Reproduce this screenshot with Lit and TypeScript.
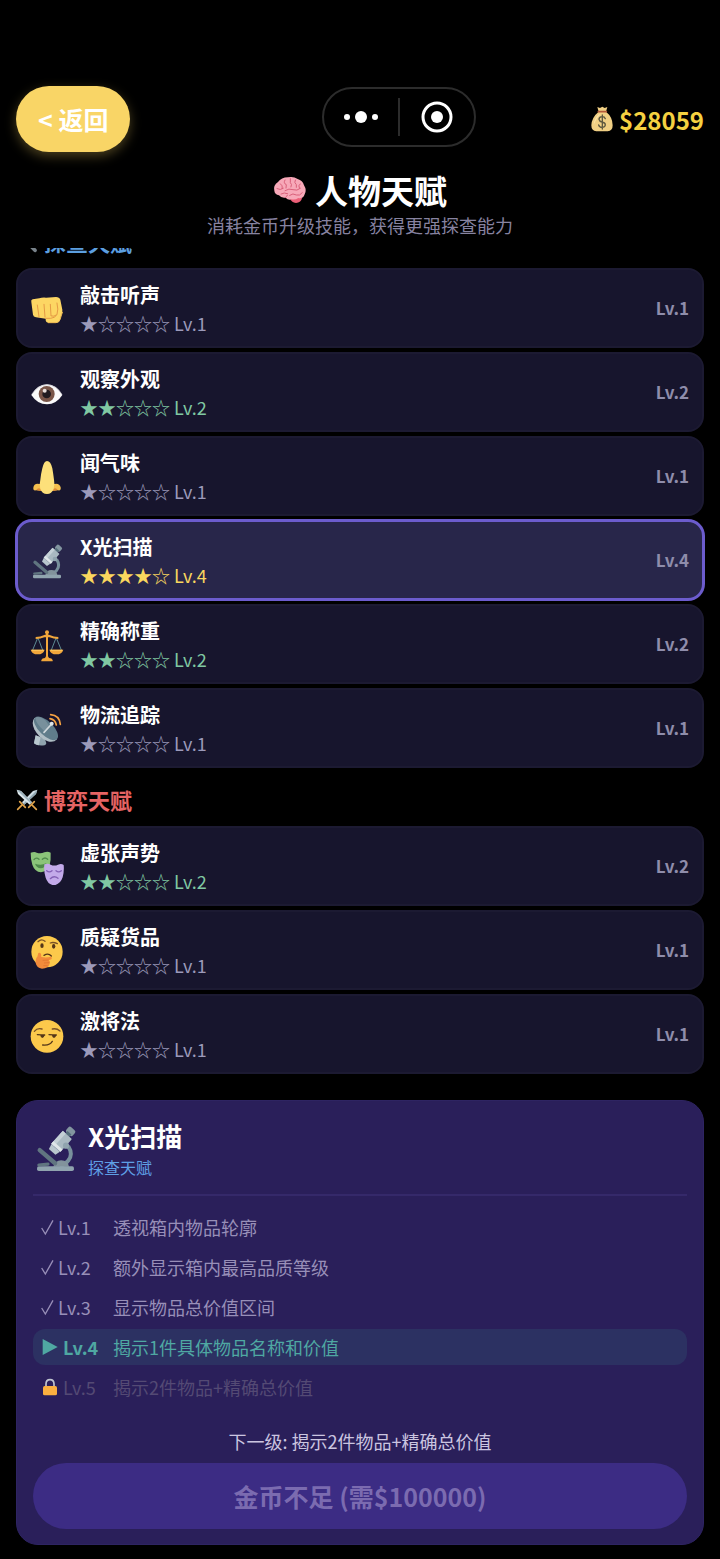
import { LitElement, html, css, svg, nothing } from 'lit';
import { customElement, property, state } from 'lit/decorators.js';
import { classMap } from 'lit/directives/class-map.js';

const MAX_LEVEL = 5;

interface Talent {
  id: string;
  name: string;
  level: number;
  perks?: string[];
  cost?: number;
}

interface Group {
  id: string;
  icon: string;
  title: string;
  talents: Talent[];
}

const GROUPS: Group[] = [
  {
    id: 'explore',
    icon: 'magnifier',
    title: '探查天赋',
    talents: [
      { id: 'fist', name: '敲击听声', level: 1 },
      { id: 'eye', name: '观察外观', level: 2 },
      { id: 'nose', name: '闻气味', level: 1 },
      {
        id: 'microscope',
        name: 'X光扫描',
        level: 4,
        cost: 100000,
        perks: [
          '透视箱内物品轮廓',
          '额外显示箱内最高品质等级',
          '显示物品总价值区间',
          '揭示1件具体物品名称和价值',
          '揭示2件物品+精确总价值',
        ],
      },
      { id: 'scales', name: '精确称重', level: 2 },
      { id: 'satellite', name: '物流追踪', level: 1 },
    ],
  },
  {
    id: 'game',
    icon: 'swords',
    title: '博弈天赋',
    talents: [
      { id: 'masks', name: '虚张声势', level: 2 },
      { id: 'thinking', name: '质疑货品', level: 1 },
      { id: 'smirk', name: '激将法', level: 1 },
    ],
  },
];

// talent icons share a 102x114 box
const BOX = '0 0 102 114';

const ICONS: Record<string, { box: string; art: unknown }> = {
  fist: {
    box: BOX,
    art: svg`
      <path fill="#fdd663" d="M4 39Q2 33 8 31L28 28Q36 25 48 26L78 24Q88 24 91 32L97 62Q98 72 94 78L90 92Q87 101 78 101L54 101Q46 99 47 89L18 85Q10 84 9 77Z"/>
      <path fill="none" stroke="#e59a45" stroke-width="3" stroke-linecap="round" d="M22 48L27 83M42 46L45 84M61 46L63 80M81 42Q86 62 81 76Q76 87 62 88L48 88M64 81Q72 84 79 78"/>
      <path fill="none" stroke="#f2bd55" stroke-width="3" stroke-linecap="round" d="M55 101L78 101Q87 101 90 92L97 70"/>`,
  },
  eye: {
    box: BOX,
    art: svg`
      <path fill="#fafafa" d="M4 66Q22 34 51 34Q79 34 97 66Q79 94 51 94Q22 94 4 66Z"/>
      <path fill="none" stroke="#c3c0c8" stroke-width="2" d="M5 64Q24 36 51 35Q78 36 96 64"/>
      <circle cx="50" cy="63" r="24" fill="#795548"/>
      <circle cx="50" cy="63" r="13" fill="#211b20"/>
      <circle cx="44" cy="53" r="6" fill="#e6ddda"/>`,
  },
  nose: {
    box: BOX,
    art: svg`
      <path fill="#f5bf4e" d="M28 81Q12 78 10 92Q9 102 18 100L32 101L70 101L84 100Q94 102 92 91Q88 78 74 81Z"/>
      <path fill="#e08a38" d="M19 99Q23 92 31 95L34 102ZM83 99Q79 92 71 95L68 102Z"/>
      <path fill="#fde07a" d="M51 12Q62 12 67 34Q70 52 72 68Q75 82 71 95Q65 111 51 111Q36 111 31 95Q27 82 31 68Q33 50 37 34Q42 12 51 12Z"/>`,
  },
  microscope: {
    box: BOX,
    art: svg`
      <path fill="none" stroke="#78909c" stroke-width="9" d="M80 55Q92 74 80 88Q74 96 61 101"/>
      <path fill="#82939c" d="M46 102Q50 87 64 87Q79 87 82 102Z"/>
      <rect x="9" y="101" width="84" height="11" rx="4" fill="#90a4ae"/>
      <path fill="none" stroke="#607580" stroke-width="10" stroke-linecap="round" d="M15 64L50 94"/>
      <path stroke="#607580" stroke-width="7" stroke-linecap="round" d="M13 98L34 96"/>
      <g transform="rotate(42 62 46)">
        <rect x="53" y="4" width="20" height="16" rx="5" fill="#82959f"/>
        <rect x="57" y="16" width="12" height="8" fill="#546e7a"/>
        <rect x="49" y="23" width="28" height="40" rx="2" fill="#a9b9c1"/>
        <rect x="49" y="23" width="9" height="40" fill="#c4d0d6"/>
        <rect x="49" y="55" width="28" height="7" fill="#dfe6e9"/>
        <path fill="#b8c6cd" d="M50 63H76L73 75H53Z"/>
      </g>
      <circle cx="75" cy="54" r="7" fill="#90a4ae"/>`,
  },
  scales: {
    box: BOX,
    art: svg`
      <g fill="none" stroke="#5d8b93" stroke-width="3">
        <path d="M23 39L8 75M24 39L38 75M78 39L64 75M79 39L94 75"/>
      </g>
      <g fill="#f2a73b">
        <circle cx="51" cy="22" r="6"/>
        <rect x="48" y="24" width="6" height="76"/>
        <path d="M17 36Q31 36 43 30Q51 25 59 30Q71 36 85 36V42Q70 42 59 37H43Q32 42 17 42Z"/>
        <path d="M2 74H44Q40 88 23 88Q6 88 2 74ZM58 74H100Q96 88 79 88Q62 88 58 74Z"/>
        <path d="M34 109V105Q36 99 45 99L48 94H54L57 99Q66 99 68 105V109Z"/>
      </g>
      <path fill="#ffca5f" d="M5 74H41V77H6ZM61 74H97L96 77H62Z"/>`,
  },
  satellite: {
    box: BOX,
    art: svg`
      <path fill="#90a4ae" d="M17 79L12 103Q22 112 44 109Q48 108 49 103L45 91Z"/>
      <path fill="#b8c7ce" d="M17 79L12 103Q17 108 26 109L32 85Z"/>
      <path fill="#b0bec5" d="M14 26Q3 38 13 61Q27 89 53 97Q71 102 81 91Z"/>
      <ellipse cx="48" cy="58" rx="46" ry="21" transform="rotate(44 48 58)" fill="#607d8b"/>
      <path fill="#78909c" d="M16 26Q26 20 46 34L58 51L42 65Q18 44 16 26Z"/>
      <path stroke="#cfd8dc" stroke-width="5" stroke-linecap="round" d="M42 70L65 45"/>
      <circle cx="65" cy="44" r="6" fill="#dfe6e9"/>
      <path fill="none" stroke="#f5a142" stroke-width="5" stroke-linecap="round" d="M62 17Q88 19 91 46M60 29Q76 32 79 48"/>`,
  },
  masks: {
    box: BOX,
    art: svg`
      <path fill="#8bc47a" d="M2 17Q14 13 20 17Q32 21 43 16Q53 12 62 17Q63 39 59 54Q52 73 33 76Q14 74 7 53Q2 39 2 17Z"/>
      <path fill="none" stroke="#4f8a4c" stroke-width="4" stroke-linecap="round" d="M12 38Q19 29 27 37M37 37Q45 29 53 37"/>
      <path fill="#4f8a4c" d="M15 50Q32 57 49 49Q45 64 32 64Q20 63 15 50Z"/>
      <path fill="#c3aaea" d="M43 52Q55 48 62 53Q73 58 84 53Q94 48 101 54Q103 73 98 91Q91 112 72 115Q54 113 47 92Q41 75 43 52Z"/>
      <path fill="none" stroke="#8460b5" stroke-width="4" stroke-linecap="round" d="M50 71Q58 78 66 71M78 71Q86 78 94 71M61 95Q72 84 84 94"/>`,
  },
  thinking: {
    box: BOX,
    art: svg`
      <circle cx="51" cy="62" r="47" fill="#fcc94b"/>
      <path fill="none" stroke="#7a5226" stroke-width="4" stroke-linecap="round" d="M24 32Q34 22 45 31M61 36Q70 32 82 38"/>
      <ellipse cx="36" cy="44" rx="5" ry="7" fill="#543619"/>
      <ellipse cx="71" cy="46" rx="5" ry="7" fill="#543619"/>
      <path fill="none" stroke="#543619" stroke-width="4" stroke-linecap="round" d="M42 73Q55 65 64 75"/>
      <path fill="#f28b3b" d="M17 96Q16 82 22 77L25 66Q30 64 33 69L34 78Q49 81 63 77Q68 80 64 85L56 88Q62 92 59 98Q56 112 36 113Q20 111 17 96Z"/>
      <path fill="none" stroke="#d9702c" stroke-width="2" d="M38 88L56 87M42 96L58 95M40 104L53 104"/>`,
  },
  smirk: {
    box: BOX,
    art: svg`
      <circle cx="51" cy="64" r="49" fill="#fcc94b"/>
      <path fill="none" stroke="#7a5226" stroke-width="4" stroke-linecap="round" d="M13 49Q22 38 36 42M67 42Q80 39 90 48"/>
      <path fill="none" stroke="#543619" stroke-width="4" stroke-linecap="round" d="M22 59Q33 60 44 60M57 59Q68 60 79 60M38 90Q61 92 67 79"/>
      <path fill="#543619" d="M31 60H44Q42 69 37 69Q31 67 31 60ZM66 60H79Q77 69 72 69Q66 67 66 60Z"/>`,
  },
  swords: {
    box: '0 0 66 66',
    art: svg`
      <g stroke-linecap="round">
        <path fill="#cfdde4" d="M64 2L60 15L25 47L18 40L51 6Z"/>
        <path fill="#8fa5b0" d="M64 2L60 15L25 47L22 44Z"/>
        <path stroke="#e0a34a" stroke-width="5" d="M11 38L28 55M17 49L5 61"/>
        <path fill="#dde8ed" d="M2 2L6 15L41 47L48 40L15 6Z"/>
        <path fill="#9db2bc" d="M2 2L15 6L48 40L45 44Z"/>
        <path stroke="#e0a34a" stroke-width="5" d="M55 38L38 55M49 49L61 61"/>
      </g>`,
  },
  magnifier: {
    box: '0 0 66 66',
    art: svg`
      <path stroke="#78828a" stroke-width="11" stroke-linecap="round" d="M38 38L57 58"/>
      <circle cx="25" cy="25" r="20" fill="#a9d5ea" stroke="#90a4ae" stroke-width="6"/>`,
  },
  brain: {
    box: '0 0 102 84',
    art: svg`
      <path fill="#ec5f78" d="M50 66Q74 58 88 64Q84 81 69 81Q55 80 50 66Z"/>
      <path fill="#f7a8b8" d="M4 44Q0 28 15 18Q25 4 45 4Q61 0 74 9Q89 13 93 28Q102 42 95 55Q91 69 76 66Q67 72 56 70Q46 74 38 65Q24 67 18 58Q5 55 4 44Z"/>
      <path fill="none" stroke="#d9607a" stroke-width="3" stroke-linecap="round" d="M12 38Q22 44 31 37M22 23Q30 28 28 38M36 12Q30 22 40 26L39 36M52 8V20Q58 24 54 33M67 12Q62 20 70 26V34M36 44Q48 36 60 41Q72 46 82 37M82 24Q74 27 80 37M24 54Q34 48 44 53M50 58Q60 50 70 57Q80 61 88 50M37 65Q42 62 43 58"/>`,
  },
  money: {
    box: '0 0 66 78',
    art: svg`
      <path fill="#f0cf84" d="M19 3L27 6L34 2L41 6L49 3L45 17Q65 33 65 58Q65 75 50 76H16Q1 75 1 58Q2 34 23 17Z"/>
      <path fill="#fbe3a6" d="M23 25Q9 39 8 57Q17 34 29 25Z"/>
      <path stroke="#b3593a" stroke-width="5" stroke-linecap="round" d="M22 17H46"/>
      <path fill="none" stroke="#5e5840" stroke-width="4" stroke-linecap="round" d="M43 38Q40 31 33 32Q24 33 24 40Q25 46 33 48Q43 50 43 57Q42 64 33 64Q25 64 23 57M34 27V69"/>`,
  },
  check: {
    box: '0 0 39 54',
    art: svg`<path fill="none" stroke="currentColor" stroke-width="4" d="M2 30L13 48L36 7"/>`,
  },
  play: {
    box: '0 0 54 54',
    art: svg`<path fill="currentColor" d="M5 3L50 27L5 51Z"/>`,
  },
  lock: {
    box: '0 0 54 54',
    art: svg`
      <path fill="none" stroke="#c0c5d0" stroke-width="5" d="M15 27V18Q15 5 27 5Q39 5 39 18V27"/>
      <rect x="6" y="24" width="42" height="28" rx="5" fill="#fbb040"/>`,
  },
  dots: {
    box: '0 0 34 34',
    art: svg`
      <g fill="#fff">
        <circle cx="3" cy="17" r="3"/>
        <circle cx="17" cy="17" r="6"/>
        <circle cx="31" cy="17" r="3"/>
      </g>`,
  },
  target: {
    box: '0 0 34 34',
    art: svg`
      <circle cx="17" cy="17" r="14" fill="none" stroke="#fff" stroke-width="3"/>
      <circle cx="17" cy="17" r="6" fill="#fff"/>`,
  },
};

const icon = (name: string) => html`
  <svg class="icon ${name}" viewBox=${ICONS[name].box} aria-hidden="true">${ICONS[name].art}</svg>
`;

@customElement('talent-card')
export class TalentCard extends LitElement {
  @property({ attribute: false }) talent!: Talent;
  @property({ type: Boolean }) selected = false;

  static styles = css`
    :host {
      display: block;
    }
    .card {
      display: flex;
      align-items: center;
      gap: 16px;
      box-sizing: border-box;
      width: 100%;
      min-height: 80px;
      padding: 0 13px 0 12px;
      border: 2px solid #1c1a32;
      border-radius: 16px;
      background: #17152d;
      color: #fff;
      font: inherit;
      text-align: left;
      cursor: pointer;
    }
    .card.selected {
      border-color: #6c5ccd;
      background: #28264a;
      box-shadow: 0 0 0 1px #6c5ccd;
    }
    .icon {
      flex: none;
      width: 34px;
      height: 38px;
    }
    .body {
      flex: 1;
      display: flex;
      flex-direction: column;
      padding-top: 2px;
    }
    .name {
      font-size: 20px;
      font-weight: 700;
      line-height: 29px;
    }
    .stars {
      font-size: 18px;
      line-height: 29px;
      color: #9c9aba;
    }
    .stars.mid {
      color: #80c8a2;
    }
    .stars.high {
      color: #fad75e;
    }
    .level {
      padding-bottom: 2px;
      font-size: 17px;
      font-weight: 700;
      color: #8f8dab;
    }
  `;

  render() {
    const { id, name, level } = this.talent;
    const stars = '★'.repeat(level) + '☆'.repeat(MAX_LEVEL - level);
    return html`
      <button class=${classMap({ card: true, selected: this.selected })} aria-pressed=${this.selected}>
        ${icon(id)}
        <span class="body">
          <span class="name">${name}</span>
          <span class=${classMap({ stars: true, mid: level === 2 || level === 3, high: level > 3 })}>${stars} Lv.${level}</span>
        </span>
        <span class="level">Lv.${level}</span>
      </button>
    `;
  }
}

@customElement('talent-detail')
export class TalentDetail extends LitElement {
  @property({ attribute: false }) talent!: Talent;
  @property() category = '';

  static styles = css`
    :host {
      display: block;
    }
    .panel {
      padding: 15px 16px;
      border: 1px solid #2e2462;
      border-radius: 22px;
      background: #2a1f5a;
    }
    .head {
      display: flex;
      align-items: center;
      gap: 10px;
      padding-bottom: 16px;
      border-bottom: 2px solid #35296a;
    }
    .head .icon {
      width: 45px;
      height: 50px;
    }
    .title {
      margin: 0;
      font-size: 26px;
      font-weight: 700;
      line-height: 40px;
      color: #fff;
    }
    .category {
      margin: 0;
      font-size: 16px;
      line-height: 22px;
      color: #5f9fe6;
    }
    .perks {
      display: flex;
      flex-direction: column;
      gap: 4px;
      margin: 13px 0 22px;
      padding: 0;
      list-style: none;
    }
    .perk {
      display: flex;
      align-items: center;
      padding: 0 8px;
      border-radius: 12px;
      font-size: 18px;
      line-height: 36px;
      color: #988fb8;
    }
    .perk.current {
      background: #2c3162;
      color: #4fa8a2;
    }
    .perk.locked {
      color: #544a74;
    }
    .step {
      display: flex;
      align-items: center;
      gap: 4px;
      width: 72px;
    }
    .current .step {
      font-weight: 700;
    }
    .perk .icon {
      width: 18px;
      height: 18px;
    }
    .perk .check {
      width: 13px;
    }
    .next {
      margin: 0 0 8px;
      font-size: 18px;
      line-height: 28px;
      text-align: center;
      color: #cbc5e0;
    }
    .upgrade {
      display: block;
      width: 100%;
      height: 66px;
      padding: 0;
      border: 0;
      border-radius: 33px;
      background: #3c2c84;
      color: #7b6bb0;
      font: inherit;
      font-size: 25px;
      font-weight: 700;
    }
  `;

  renderPerk(text: string, index: number) {
    const level = index + 1;
    const current = level === this.talent.level;
    const locked = level > this.talent.level;
    return html`
      <li class=${classMap({ perk: true, current, locked })}>
        <span class="step">${icon(current ? 'play' : locked ? 'lock' : 'check')}<span>Lv.${level}</span></span>
        <span>${text}</span>
      </li>
    `;
  }

  render() {
    const { id, name, level, cost, perks = [] } = this.talent;
    return html`
      <section class="panel">
        <header class="head">
          ${icon(id)}
          <div>
            <h2 class="title">${name}</h2>
            <p class="category">${this.category}</p>
          </div>
        </header>
        <ul class="perks">${perks.map((text, i) => this.renderPerk(text, i))}</ul>
        <p class="next">下一级: ${perks[level]}</p>
        <button class="upgrade" disabled>金币不足 (需$${cost})</button>
      </section>
    `;
  }
}

@customElement('app-root')
export class AppRoot extends LitElement {
  @state() selected = 'microscope';
  @state() coins = 28059;

  static styles = css`
    :host {
      display: block;
      box-sizing: border-box;
      min-height: 100vh;
      padding: 86px 16px 14px;
      background: #000;
      color: #fff;
      font-family: 'Noto Sans CJK SC', sans-serif;
    }
    .icon {
      flex: none;
    }
    .bar {
      display: grid;
      grid-template-columns: 4fr auto 3fr;
      align-items: center;
    }
    .back {
      justify-self: start;
      height: 66px;
      padding: 0 22px;
      border: 0;
      border-radius: 33px;
      background: #f9d566;
      box-shadow: 0 4px 12px rgba(249, 213, 102, 0.3);
      color: #fff;
      font: inherit;
      font-size: 25px;
      font-weight: 700;
      cursor: pointer;
    }
    .capsule {
      display: flex;
      align-items: center;
      box-sizing: border-box;
      height: 60px;
      margin: 0 0 4px 2px;
      border: 2px solid #2c2c2c;
      border-radius: 30px;
    }
    .capsule-btn {
      display: flex;
      justify-content: center;
      width: 74px;
      padding: 0;
      border: 0;
      background: none;
      cursor: pointer;
    }
    .capsule-btn .icon {
      width: 34px;
      height: 34px;
    }
    .divider {
      width: 2px;
      height: 38px;
      background: #2c2c2c;
    }
    .coins {
      display: flex;
      align-items: center;
      justify-self: end;
      gap: 6px;
      font-size: 24px;
      font-weight: 700;
      color: #f5d140;
    }
    .money {
      width: 22px;
      height: 26px;
    }
    .heading {
      padding: 16px 0 10px;
      text-align: center;
    }
    .title {
      display: flex;
      align-items: center;
      justify-content: center;
      gap: 8px;
      margin: 0;
      font-size: 33px;
      font-weight: 700;
      line-height: 44px;
    }
    .brain {
      width: 34px;
      height: 28px;
    }
    .subtitle {
      margin: 0;
      font-size: 18px;
      line-height: 26px;
      color: #8783a0;
    }
    .list {
      overflow: hidden;
      margin: 0 -16px;
      padding: 0 16px 26px;
    }
    /* the list is scrolled a little, its first heading is cut by the header */
    .scrolled {
      display: flex;
      flex-direction: column;
      gap: 16px;
      margin-top: -22px;
    }
    .group {
      display: flex;
      flex-direction: column;
      gap: 4px;
    }
    .group-title {
      display: flex;
      align-items: center;
      gap: 6px;
      margin: 0 0 8px;
      font-size: 22px;
      font-weight: 700;
      line-height: 30px;
      color: #e66464;
    }
    .group-title.explore {
      color: #5c9fe0;
    }
    .group-title .icon {
      width: 22px;
      height: 22px;
      padding-top: 2px;
    }
  `;

  renderGroup(group: Group) {
    return html`
      <section class="group">
        <h2 class="group-title ${group.id}">${icon(group.icon)}${group.title}</h2>
        ${group.talents.map(
          (talent) => html`
            <talent-card
              .talent=${talent}
              ?selected=${talent.id === this.selected}
              @click=${() => (this.selected = talent.id)}
            ></talent-card>
          `
        )}
      </section>
    `;
  }

  render() {
    const group = GROUPS.find((g) => g.talents.some((t) => t.id === this.selected))!;
    const talent = group.talents.find((t) => t.id === this.selected)!;
    return html`
      <header>
        <div class="bar">
          <button class="back">&lt; 返回</button>
          <div class="capsule">
            <button class="capsule-btn" aria-label="更多">${icon('dots')}</button>
            <span class="divider"></span>
            <button class="capsule-btn" aria-label="关闭">${icon('target')}</button>
          </div>
          <div class="coins">${icon('money')}<span>$${this.coins}</span></div>
        </div>
        <div class="heading">
          <h1 class="title">${icon('brain')}人物天赋</h1>
          <p class="subtitle">消耗金币升级技能，获得更强探查能力</p>
        </div>
      </header>
      <main>
        <div class="list">
          <div class="scrolled">${GROUPS.map((g) => this.renderGroup(g))}</div>
        </div>
        ${talent.perks
          ? html`<talent-detail .talent=${talent} category=${group.title}></talent-detail>`
          : nothing}
      </main>
    `;
  }
}
